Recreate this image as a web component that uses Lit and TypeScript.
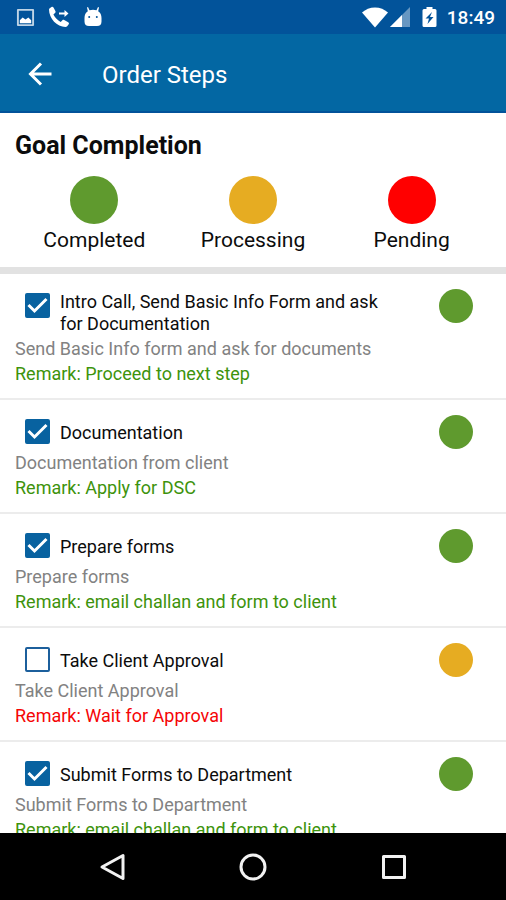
import { LitElement, html, css, svg, nothing } from "lit";
import { customElement, property, state } from "lit/decorators.js";
import { classMap } from "lit/directives/class-map.js";

type Status = "completed" | "processing" | "pending";

interface Step {
  title: string;
  detail: string;
  remark: string;
  status: Status;
  done: boolean;
}

const STEPS: Step[] = [
  {
    title: "Intro Call, Send Basic Info Form and ask for Documentation",
    detail: "Send Basic Info form and ask for documents",
    remark: "Proceed to next step",
    status: "completed",
    done: true,
  },
  {
    title: "Documentation",
    detail: "Documentation from client",
    remark: "Apply for DSC",
    status: "completed",
    done: true,
  },
  {
    title: "Prepare forms",
    detail: "Prepare forms",
    remark: "email challan and form to client",
    status: "completed",
    done: true,
  },
  {
    title: "Take Client Approval",
    detail: "Take Client Approval",
    remark: "Wait for Approval",
    status: "processing",
    done: false,
  },
  {
    title: "Submit Forms to Department",
    detail: "Submit Forms to Department",
    remark: "email challan and form to client",
    status: "completed",
    done: true,
  },
];

const LEGEND: { status: Status; label: string }[] = [
  { status: "completed", label: "Completed" },
  { status: "processing", label: "Processing" },
  { status: "pending", label: "Pending" },
];

const dotStyles = css`
  .dot {
    display: block;
    border-radius: 50%;
    background: #5f9a2e;
  }
  .dot.processing {
    background: #e6ac22;
  }
  .dot.pending {
    background: #ff0000;
  }
`;

@customElement("status-bar")
export class StatusBar extends LitElement {
  static styles = css`
    :host {
      display: flex;
      align-items: center;
      height: 34px;
      padding: 0 11px 0 16px;
      background: #02539a;
      color: #fff;
      font-size: 19px;
      font-weight: 500;
    }
    svg {
      display: block;
      fill: currentColor;
    }
    .notices,
    .system {
      display: flex;
      align-items: center;
    }
    .notices {
      gap: 12px;
      flex: 1;
    }
    .battery {
      margin: 0 10px 0 12px;
    }
    .signal {
      margin-left: 2px;
    }
  `;

  render() {
    return html`
      <div class="notices">
        <svg width="19" height="19" viewBox="0 0 20 20" aria-hidden="true">
          <path fill-rule="evenodd" opacity=".75"
            d="M2 1h16a1 1 0 0 1 1 1v16a1 1 0 0 1-1 1H2a1 1 0 0 1-1-1V2a1 1 0 0 1 1-1zm1 2v14h14V3z" />
          <path d="M4 16v-3l3-3 3 2 3-2 3 3v3z" />
        </svg>
        <svg width="24" height="24" viewBox="0 0 24 24" aria-hidden="true">
          <path
            d="M2 4.500c0-.8 1-1.500 2.500-2.500.8-.5 1.500-.3 2 .5l2 3.800c.3.700.1 1.300-.5 1.800L6.400 9.500c1.600 3.200 4.200 5.800 7.300 7.400l1.700-1.700c.5-.5 1.100-.6 1.800-.2l4 2.200c.8.500 1 1.200.5 2-1 1.600-1.900 2.800-3.200 2.800C10 22 2 13.500 2 4.500z" />
          <path d="M12 7.500h5.500V5l4 3.500-4 3.500V9.500H12z" />
        </svg>
        <svg width="20" height="22" viewBox="0 0 20 22" aria-hidden="true">
          <path fill-rule="evenodd"
            d="M5 1l1.500 3.300a10 10 0 0 1 7 0L15 1l1 .5-.8 3.700C17.500 6.500 18.500 9 18.500 12v3.500c0 3-1.500 4.500-4.500 4.500H6c-3 0-4.500-1.500-4.500-4.500V12c0-3 1-5.500 3.300-6.800L4 1.500zM5.200 11a1 1 0 1 0 2 0 1 1 0 0 0-2 0zm7.600 0a1 1 0 1 0 2 0 1 1 0 0 0-2 0z" />
        </svg>
      </div>
      <div class="system">
        <svg width="26" height="22" viewBox="0 0 26 22" aria-hidden="true">
          <path d="M0 6.500C3.600 3.400 8 1.500 13 1.500s9.400 1.900 13 5L13 21.500z" />
        </svg>
        <svg class="signal" width="20" height="20" viewBox="0 0 20 20" aria-hidden="true">
          <path opacity=".4" d="M0 20L20 0v20z" />
          <path d="M0 20L12 8v12z" />
        </svg>
        <svg class="battery" width="15" height="22" viewBox="0 0 15 22" aria-hidden="true">
          <path fill-rule="evenodd"
            d="M4.500 1h6v2H13a1.500 1.500 0 0 1 1.500 1.500v15A1.500 1.500 0 0 1 13 21H2A1.500 1.500 0 0 1 .5 19.500v-15A1.500 1.500 0 0 1 2 3h2.500zM10 6L3.500 12.500H7L5.500 18l6-7H8z" />
        </svg>
        <time>18:49</time>
      </div>
    `;
  }
}

@customElement("app-bar")
export class AppBar extends LitElement {
  @property() heading = "";

  static styles = css`
    :host {
      display: flex;
      align-items: center;
      gap: 46px;
      height: 79px;
      box-sizing: border-box;
      padding: 4px 24px 0;
      background: #0367a3;
      border-bottom: 2px solid #02539a;
      color: #fff;
    }
    button {
      padding: 0;
      border: 0;
      background: none;
      color: inherit;
    }
    svg {
      display: block;
      fill: none;
      stroke: currentColor;
      stroke-width: 3;
    }
    h1 {
      margin: 0;
      font-size: 24px;
      line-height: 32px;
      font-weight: 400;
    }
  `;

  render() {
    return html`
      <button type="button" aria-label="Back">
        <svg width="32" height="32" viewBox="0 0 32 32">
          <path d="M27.500 15H7M17 4.500L6.500 15 17 25.500" />
        </svg>
      </button>
      <h1>${this.heading}</h1>
    `;
  }
}

@customElement("goal-legend")
export class GoalLegend extends LitElement {
  static styles = [
    dotStyles,
    css`
      :host {
        display: block;
        padding: 17px 15px 13px;
        border-bottom: 7px solid #e2e2e2;
      }
      h2 {
        margin: 0 0 14px;
        font-size: 25px;
        line-height: 32px;
        font-weight: 700;
      }
      ul {
        display: grid;
        grid-template-columns: repeat(3, 1fr);
        margin: 0;
        padding: 0;
        list-style: none;
      }
      li {
        display: flex;
        flex-direction: column;
        align-items: center;
        gap: 2px;
        font-size: 21px;
        line-height: 28px;
      }
      .dot {
        width: 48px;
        height: 48px;
      }
    `,
  ];

  render() {
    return html`
      <h2>Goal Completion</h2>
      <ul>
        ${LEGEND.map(
          ({ status, label }) => html`
            <li><span class="dot ${status}"></span>${label}</li>
          `
        )}
      </ul>
    `;
  }
}

@customElement("order-step")
export class OrderStep extends LitElement {
  @property({ attribute: false }) step!: Step;
  @state() private checked = false;

  static styles = [
    dotStyles,
    css`
      :host {
        display: block;
        padding: 15px 33px 12px 15px;
        border-bottom: 2px solid #ececec;
        font-size: 18px;
        line-height: 25px;
      }
      .head {
        display: flex;
        align-items: flex-start;
        gap: 50px;
      }
      label {
        flex: 1;
        display: flex;
        align-items: flex-start;
        gap: 10px;
        min-height: 35px;
        padding-left: 10px;
      }
      .title {
        margin: auto 0;
        padding: 2px 0 1px;
        line-height: 22px;
      }
      .box {
        display: grid;
        flex: none;
        margin-top: 4px;
      }
      .box > * {
        grid-area: 1 / 1;
      }
      input {
        appearance: none;
        box-sizing: border-box;
        width: 25px;
        height: 25px;
        margin: 0;
        border: 2px solid #1c5f9c;
        border-radius: 2px;
      }
      input:checked {
        background: #0862a0;
        border-color: #0862a0;
      }
      svg {
        fill: none;
        stroke: #fff;
        stroke-width: 3;
        pointer-events: none;
      }
      .dot {
        flex: none;
        width: 34px;
        height: 34px;
      }
      p {
        margin: 0;
        color: #828282;
      }
      .remark {
        color: #3d930c;
      }
      .remark.waiting {
        color: #f50505;
      }
    `,
  ];

  willUpdate(changed: Map<string, unknown>) {
    if (changed.has("step")) this.checked = this.step.done;
  }

  private toggle(e: Event) {
    this.checked = (e.target as HTMLInputElement).checked;
  }

  render() {
    const { title, detail, remark, status } = this.step;
    return html`
      <div class="head">
        <label>
          <span class="box">
            <input type="checkbox" .checked=${this.checked} @change=${this.toggle} />
            ${this.checked
              ? html`<svg width="25" height="25" viewBox="0 0 25 25" aria-hidden="true">
                  ${svg`<path d="M3.500 12L9.500 18 21.500 6" />`}
                </svg>`
              : nothing}
          </span>
          <span class="title">${title}</span>
        </label>
        <span class="dot ${status}"></span>
      </div>
      <p>${detail}</p>
      <p class=${classMap({ remark: true, waiting: status !== "completed" })}>
        Remark: ${remark}
      </p>
    `;
  }
}

@customElement("nav-bar")
export class NavBar extends LitElement {
  static styles = css`
    :host {
      display: grid;
      grid-template-columns: repeat(3, 1fr);
      align-items: center;
      justify-items: center;
      height: 67px;
      padding: 0 42px;
      background: #000;
    }
    button {
      padding: 0;
      border: 0;
      background: none;
      color: #f2f2f2;
    }
    svg {
      display: block;
      fill: none;
      stroke: currentColor;
      stroke-width: 3;
      stroke-linejoin: round;
    }
  `;

  render() {
    return html`
      <button type="button" aria-label="Back">
        <svg width="28" height="28" viewBox="0 0 28 28">
          <path d="M25 2.500v23L4 14z" />
        </svg>
      </button>
      <button type="button" aria-label="Home">
        <svg width="28" height="28" viewBox="0 0 28 28"><circle cx="14" cy="14" r="12" /></svg>
      </button>
      <button type="button" aria-label="Recent apps">
        <svg width="28" height="28" viewBox="0 0 28 28">
          <rect x="3.500" y="3.500" width="21" height="21" />
        </svg>
      </button>
    `;
  }
}

@customElement("app-root")
export class AppRoot extends LitElement {
  static styles = css`
    :host {
      display: flex;
      flex-direction: column;
      height: 100vh;
      background: #fff;
      color: #0c0c0c;
      font-family: Roboto, "Liberation Sans", sans-serif;
    }
    status-bar,
    app-bar,
    goal-legend,
    nav-bar {
      flex: none;
    }
    main {
      flex: 1;
      min-height: 0;
      overflow-y: auto;
      scrollbar-width: none;
    }
  `;

  render() {
    return html`
      <status-bar></status-bar>
      <app-bar heading="Order Steps"></app-bar>
      <goal-legend></goal-legend>
      <main>${STEPS.map((step) => html`<order-step .step=${step}></order-step>`)}</main>
      <nav-bar></nav-bar>
    `;
  }
}
